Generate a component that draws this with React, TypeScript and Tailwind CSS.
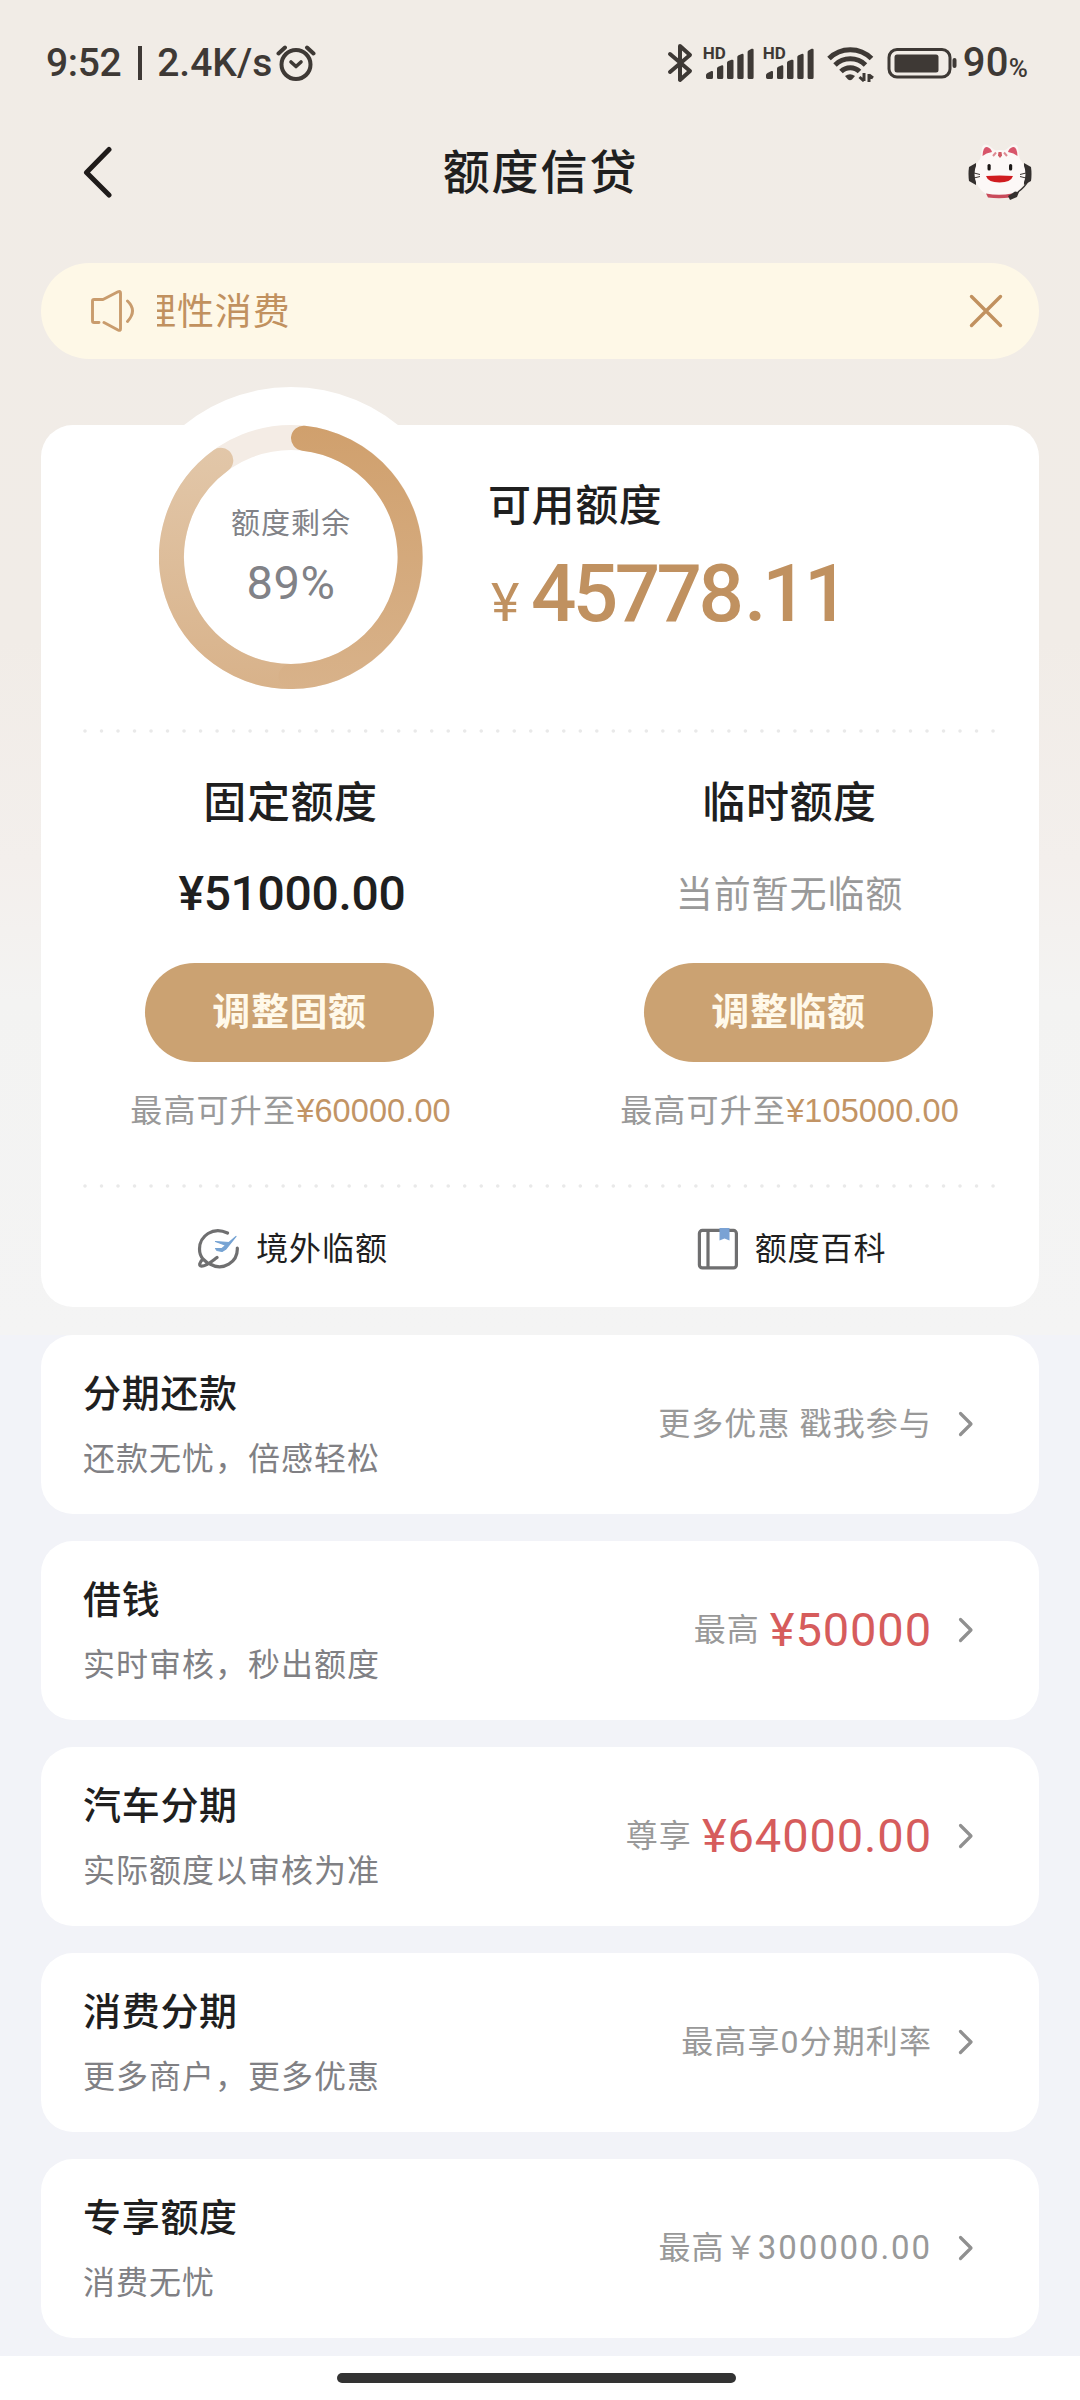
import React from 'react';

interface Product {
  title: string;
  desc: string;
  label: string;
  note?: string;
  amount?: string;
}

const products: Product[] = [
  { title: '分期还款', desc: '还款无忧，倍感轻松', label: '更多优惠 戳我参与' },
  { title: '借钱', desc: '实时审核，秒出额度', label: '最高', amount: '¥50000' },
  { title: '汽车分期', desc: '实际额度以审核为准', label: '尊享', amount: '¥64000.00' },
  { title: '消费分期', desc: '更多商户，更多优惠', label: '最高享0分期利率' },
  { title: '专享额度', desc: '消费无忧', label: '最高￥', note: '300000.00' },
];

function Signal() {
  return (
    <div className="relative h-[34px] w-[50px]">
      <span className="absolute -top-[3px] -left-[1px] text-[17px] leading-[20px] font-bold">HD</span>
      <svg width="50" height="34" viewBox="0 0 50 34" fill="#3e3935">
        <path d="M2 31.500 a2 2 0 0 0 2 1.500 h3.500 a1.500 1.500 0 0 0 1.500 -1.500 v-5.500 q0 -1.500 -1.500 -1 l-4 2 q-1.500 .8 -1.500 2z" />
        <path d="M13 22.500 q0 -1.300 1.300 -1.800 l3 -1.200 q2 -.6 2 1 V31.500 a1.500 1.500 0 0 1 -1.500 1.500 h-3.300 a1.500 1.500 0 0 1 -1.500 -1.500z" />
        <path d="M23 16.800 q0 -1.300 1.300 -1.800 l3.200 -1.200 q2 -.6 2 1 V31.500 a1.500 1.500 0 0 1 -1.500 1.500 h-3.500 a1.500 1.500 0 0 1 -1.500 -1.500z" />
        <path d="M33.300 11 q0 -1.300 1.300 -1.800 l3 -1.200 q2 -.6 2 1 V31.500 a1.500 1.500 0 0 1 -1.500 1.500 h-3.300 a1.500 1.500 0 0 1 -1.500 -1.500z" />
        <path d="M43.600 6 q0 -1.300 1.300 -1.800 l2.700 -1.400 q2 -.6 2 1 V31.500 a1.500 1.500 0 0 1 -1.500 1.500 h-3 a1.500 1.500 0 0 1 -1.500 -1.500z" />
      </svg>
    </div>
  );
}

function StatusBar() {
  return (
    <div className="flex h-[126px] items-center pr-[52px] pl-[46px] text-[#3e3935]">
      <span className="text-[39px] leading-none font-medium tracking-[-0.4px]">9:52</span>
      <span className="ml-[17px] h-[34px] w-[4px] bg-[#3e3935]" />
      <span className="ml-[15px] text-[39px] leading-none font-medium">2.4K/s</span>
      <svg className="ml-[4px]" width="40" height="38" viewBox="0 0 40 38" fill="none" stroke="#3e3935" strokeLinecap="round" strokeLinejoin="round">
        <circle cx="20" cy="20.500" r="14.500" strokeWidth="4" />
        <path d="M15 18 L20 22.500 L25 18" strokeWidth="3.600" />
        <path d="M2.500 9.500 L9 3.500 M31 3.500 L37.500 9.500" strokeWidth="4" />
      </svg>

      <svg className="ml-auto" width="26" height="40" viewBox="0 0 26 40" fill="none" stroke="#3e3935" strokeWidth="4" strokeLinecap="round" strokeLinejoin="round">
        <path d="M3 11 L23 28 L13 37 V3 L23 12 L3 29" />
      </svg>
      <div className="ml-[11px] flex items-center gap-[10px]">
        <Signal />
        <Signal />
      </div>
      <svg className="ml-[13px]" width="47" height="37" viewBox="0 0 47 37" fill="none" stroke="#3e3935" strokeWidth="5">
        <path d="M2 13.500 A30 30 0 0 1 44.500 13.500" />
        <path d="M8 20 A22 22 0 0 1 38.500 20" />
        <path d="M14 26.500 A13 13 0 0 1 32.500 26.500" />
        <path d="M18 31 Q23 27.500 28 31 L25 34.500 Q23 36 21 34.500z" fill="#3e3935" stroke="none" />
        <path d="M37 28 V36 M37 36 L32.500 32 M42 37 V29 M42 30 L46 33" strokeWidth="3" />
      </svg>
      <svg className="ml-[13px]" width="71" height="32" viewBox="0 0 71 32">
        <rect x="2" y="2.500" width="61" height="27.500" rx="8" fill="none" stroke="#3e3935" strokeWidth="3" />
        <rect x="7.500" y="7.500" width="44" height="18" rx="2.500" fill="#3e3935" />
        <rect x="65.500" y="11" width="4" height="10" rx="2" fill="#3e3935" />
      </svg>
      <span className="ml-[5px] text-[40px] leading-none font-medium tracking-[0.3px]">90</span>
      <span className="mt-[9px] text-[26px] leading-none font-medium">%</span>
    </div>
  );
}

function Mascot() {
  return (
    <svg width="64" height="58" viewBox="0 0 64 58">
      <path d="M8 20 L1 24 Q0 31 1 38 L8 42z M56 20 L63 24 Q64 31 63 38 L56 42z" fill="#34302f" />
      <path d="M11 24 L14 5 Q15 0 20 2 L28 8z M53 24 L50 5 Q49 0 44 2 L36 8z" fill="#fbf6f4" />
      <ellipse cx="32" cy="31" rx="25.500" ry="24" fill="#fcf8f7" />
      <path d="M14.500 13 Q15 3.500 19 4 Q23 5 24 9 Q18 10 14.500 13z M49.500 13 Q49 3.500 45 4 Q41 5 40 9 Q46 10 49.500 13z" fill="#d8556b" />
      <path d="M30.500 9 h3 l.5 3.500 l-2 2.500 l-2 -2.500z" fill="#cf5b65" />
      <path d="M25 13 L28 9.500 M39 13 L36 9.500" stroke="#de8b94" strokeWidth="2" />
      <rect x="19.500" y="21" width="3.200" height="6.500" rx="1.500" fill="#1c1817" />
      <rect x="41" y="21" width="3.200" height="6.500" rx="1.500" fill="#1c1817" />
      <path d="M18 33 Q32 32 45 33 Q43 39.500 31.500 39.500 Q20 39.500 18 33z" fill="#d01c20" />
      <path d="M6 30 L12 31.500 M6 35 L12 33.500 M58 30 L52 31.500 M58 35 L52 33.500" stroke="#3a3432" strokeWidth="1" />
      <path d="M18 50.500 Q31 53 44 50.500 L42 54.500 Q31 56 20 54.500z" fill="#c94b5b" />
      <path d="M60 38 Q57 44 50 49" stroke="#34302f" strokeWidth="1.500" fill="none" />
      <path d="M40 53 L47 48.500 L51 49 L49 54 L42 57z" fill="#34302f" />
    </svg>
  );
}

function NavBar() {
  return (
    <div className="flex h-[92px] items-center justify-between pr-[48px] pl-[82px]">
      <svg width="66" height="52" viewBox="0 0 66 52" fill="none" stroke="#1f1b1a" strokeWidth="5" strokeLinecap="round" strokeLinejoin="round">
        <path d="M27 3.500 L4.500 26.500 L27 49" />
      </svg>
      <h1 className="mr-[35px] pt-[1px] text-[47px] leading-none font-medium tracking-[1.9px] text-[#1f1f1f]">额度信贷</h1>
      <Mascot />
    </div>
  );
}

function Notice() {
  return (
    <div className="mx-[41px] mt-[45px] flex h-[96px] items-center rounded-full bg-[#fef8e7] pr-[36px] pl-[49px] text-[#c1915f]">
      <svg width="46" height="42" viewBox="0 0 46 42" fill="none" stroke="#c99c6d" strokeWidth="2.900" strokeLinecap="round" strokeLinejoin="round">
        <path d="M9 32.500 H4 Q2.500 32.500 2.500 31 V11 Q2.500 9.500 4 9.500 H13 L28 1.800 Q30.500 .8 30.500 3 V39 Q30.500 41.200 28 40 L14 32.500" />
        <path d="M37.500 11 Q47.500 20.500 37.500 31.500" />
      </svg>
      <div className="ml-[21px] flex-1 overflow-hidden">
        <p className="-ml-[18px] pt-[3px] text-[37px] leading-[48px] tracking-[0.9px] whitespace-nowrap">理性消费</p>
      </div>
      <svg width="34" height="34" viewBox="0 0 34 34" stroke="#c1915f" strokeWidth="3.400" strokeLinecap="round">
        <path d="M2.500 2.500 L31.500 31.500 M31.500 2.500 L2.500 31.500" />
      </svg>
    </div>
  );
}

function Ring() {
  return (
    <div className="relative h-[264px] w-[264px]">
      <svg className="absolute inset-0" width="264" height="264" viewBox="0 0 264 264" fill="none" strokeWidth="25">
        <defs>
          <linearGradient id="ringRight" x1="0" y1="0" x2="0" y2="264" gradientUnits="userSpaceOnUse">
            <stop offset="0" stopColor="#d0a06d" />
            <stop offset="1" stopColor="#d8b28a" />
          </linearGradient>
          <linearGradient id="ringLeft" x1="0" y1="264" x2="0" y2="20" gradientUnits="userSpaceOnUse">
            <stop offset="0" stopColor="#d8b28a" />
            <stop offset="1" stopColor="#e2c7a9" />
          </linearGradient>
        </defs>
        <circle cx="132" cy="132" r="119.500" stroke="#f4ece5" />
        <path d="M61.800 35.300 A119.500 119.500 0 0 0 132 251.500" stroke="url(#ringLeft)" strokeLinecap="round" />
        <path d="M144.500 13.200 A119.500 119.500 0 0 1 132 251.500" stroke="url(#ringRight)" strokeLinecap="round" />
      </svg>
      <div className="relative flex flex-col items-center pt-[79px] text-[#818287]">
        <span className="text-[29px] leading-[40px] tracking-[1px]">额度剩余</span>
        <span className="mt-[15px] text-[47px] leading-[48px] tracking-[0.6px]">89%</span>
      </div>
    </div>
  );
}

function Divider() {
  return (
    <svg className="mx-auto block" width="916" height="4" viewBox="0 0 916 4">
      <path d="M3 2 H913" stroke="#e9e9e9" strokeWidth="3.600" strokeLinecap="round" strokeDasharray="0 16.510" />
    </svg>
  );
}

interface QuotaProps {
  title: string;
  button: string;
  limit: string;
  children: React.ReactNode;
}

function Quota({ title, button, limit, children }: QuotaProps) {
  return (
    <div className="flex flex-1 flex-col items-center">
      <h3 className="text-[43px] leading-[60px] font-medium tracking-[0.6px] text-[#1f1f1f]">{title}</h3>
      <div className="mt-[31px] flex h-[60px] items-center">{children}</div>
      <button
        type="button"
        className="mt-[39px] mr-[2px] h-[99px] w-[289px] rounded-full bg-[#cba272] pb-[1px] text-[38px] leading-none font-bold tracking-[0.6px] text-[#fff9ea]"
      >
        {button}
      </button>
      <p className="mt-[29px] flex items-center text-[32px] leading-[40px] text-[#999]">
        <span className="tracking-[1.2px]">最高可升至</span>
        <span className="font-['Liberation_Sans',sans-serif] text-[32.500px] tracking-[0.1px] text-[#c29465]">{limit}</span>
      </p>
    </div>
  );
}

function QuotaCard() {
  return (
    <section className="relative mx-[41px] mt-[66px] h-[882px] rounded-[32px] bg-white">
      {/* white bump behind the ring */}
      <div className="absolute -top-[38px] left-[80px] h-[340px] w-[340px] rounded-full bg-white" />

      <div className="relative flex h-[304px] pl-[118px]">
        <Ring />
        <div className="ml-[65px] pt-[51px]">
          <h2 className="text-[43px] leading-[60px] font-medium tracking-[0.6px] text-[#1f1f1f]">可用额度</h2>
          <div className="mt-[14px] flex items-baseline pl-[3px] leading-[88px] text-[#c09160]">
            <span className="w-[40px] text-[54px]">¥</span>
            <span className="text-[80px] font-medium tracking-[-3.600px]">45778</span>
            <span className="ml-[4px] text-[80px] font-medium tracking-[-3.400px]">.</span>
            <span className="-ml-[1px] text-[80px] font-medium tracking-[-3.600px]">11</span>
          </div>
        </div>
      </div>

      <Divider />

      <div className="flex pt-[40px]">
        <Quota title="固定额度" button="调整固额" limit="¥60000.00">
          <span className="ml-[3px] text-[48px] leading-none font-medium tracking-[-0.3px] text-[#1f1f1f]">¥51000.00</span>
        </Quota>
        <Quota title="临时额度" button="调整临额" limit="¥105000.00">
          <span className="pt-[2px] text-[37px] leading-none tracking-[0.9px] text-[#999]">当前暂无临额</span>
        </Quota>
      </div>

      <div className="mt-[53px]">
        <Divider />
      </div>

      <div className="flex pt-[37px] text-[32px] leading-[48px] text-[#1f1f1f]">
        <div className="flex flex-1 items-center justify-center pl-[4px]">
          <svg width="42" height="42" viewBox="0 0 42 42" fill="none" stroke="#6f6f70" strokeWidth="3.200" strokeLinecap="round" strokeLinejoin="round">
            <path d="M30.500 5 C16 -2 2.500 8 2.500 21 C2.500 25.500 3.800 28.500 6 31 C2.500 34 1.500 38 4.500 38.200 C9 38.500 14 34 20 29.500 M6 31 L10.500 35 M13 36 C26 43.500 41 34 40.300 20" />
            <path d="M18.500 20.500 L25 20.500 L39 8.500 L29 21 L25 23.500 L20 22.500z M18.500 13.500 L32 14.500 L28 17z" fill="#76a3d3" stroke="#76a3d3" strokeWidth="1.200" />
          </svg>
          <span className="ml-[17px] tracking-[0.9px]">境外临额</span>
        </div>
        <div className="flex flex-1 items-center justify-center pl-[4px]">
          <svg width="42" height="42" viewBox="0 0 42 42" fill="none" stroke="#6f6f70" strokeWidth="3.200">
            <rect x="2.400" y="2.400" width="37" height="37.500" rx="3" />
            <path d="M11 2.500 V40" />
            <path d="M22.500 0 H32.500 V12.500 L27.500 10.500 L22.500 12.500z" fill="#7aa2d4" stroke="none" />
          </svg>
          <span className="ml-[16px] tracking-[0.9px]">额度百科</span>
        </div>
      </div>
    </section>
  );
}

function ProductRow({ title, desc, label, note, amount }: Product) {
  return (
    <li className="flex h-[179px] items-center justify-between rounded-[32px] bg-white pr-[65px] pl-[42px]">
      <div>
        <h3 className="text-[38px] leading-[50px] font-medium tracking-[0.7px] text-[#1f1f1f]">{title}</h3>
        <p className="mt-[18px] text-[32px] leading-[44px] tracking-[1px] text-[#808084]">{desc}</p>
      </div>
      <div className="flex items-center pb-[2px] text-[#999]">
        <span className="text-[32px] leading-none tracking-[1.1px]">{label}</span>
        {note && <span className="text-[33px] leading-none tracking-[1.900px]">{note}</span>}
        {amount && <span className="ml-[10px] text-[47px] leading-none tracking-[0.9px] text-[#d65c5c]">{amount}</span>}
        <svg className="ml-[26px]" width="16" height="26" viewBox="0 0 16 26" fill="none" stroke="#909090" strokeWidth="3.200" strokeLinecap="round" strokeLinejoin="round">
          <path d="M2.500 2.500 L13 13 L2.500 23.500" />
        </svg>
      </div>
    </li>
  );
}

export default function App() {
  return (
    <div className="flex h-[2400px] w-[1080px] flex-col overflow-hidden bg-[linear-gradient(180deg,#f1ece6_0px,#f1ece7_640px,#f3efec_860px,#f3f3f2_1000px,#f4f4f4_1335px,#f2f3f8_1335px)] font-['Roboto','Noto_Sans_CJK_SC',sans-serif]">
      <StatusBar />
      <NavBar />
      <Notice />
      <QuotaCard />
      <ul className="mx-[41px] mt-[28px] flex flex-col gap-[27px]">
        {products.map((product) => (
          <ProductRow key={product.title} {...product} />
        ))}
      </ul>
      <div className="mt-auto flex h-[44px] justify-center bg-white pt-[17px] pr-[7px]">
        <div className="h-[10px] w-[399px] rounded-full bg-[#333]" />
      </div>
    </div>
  );
}
